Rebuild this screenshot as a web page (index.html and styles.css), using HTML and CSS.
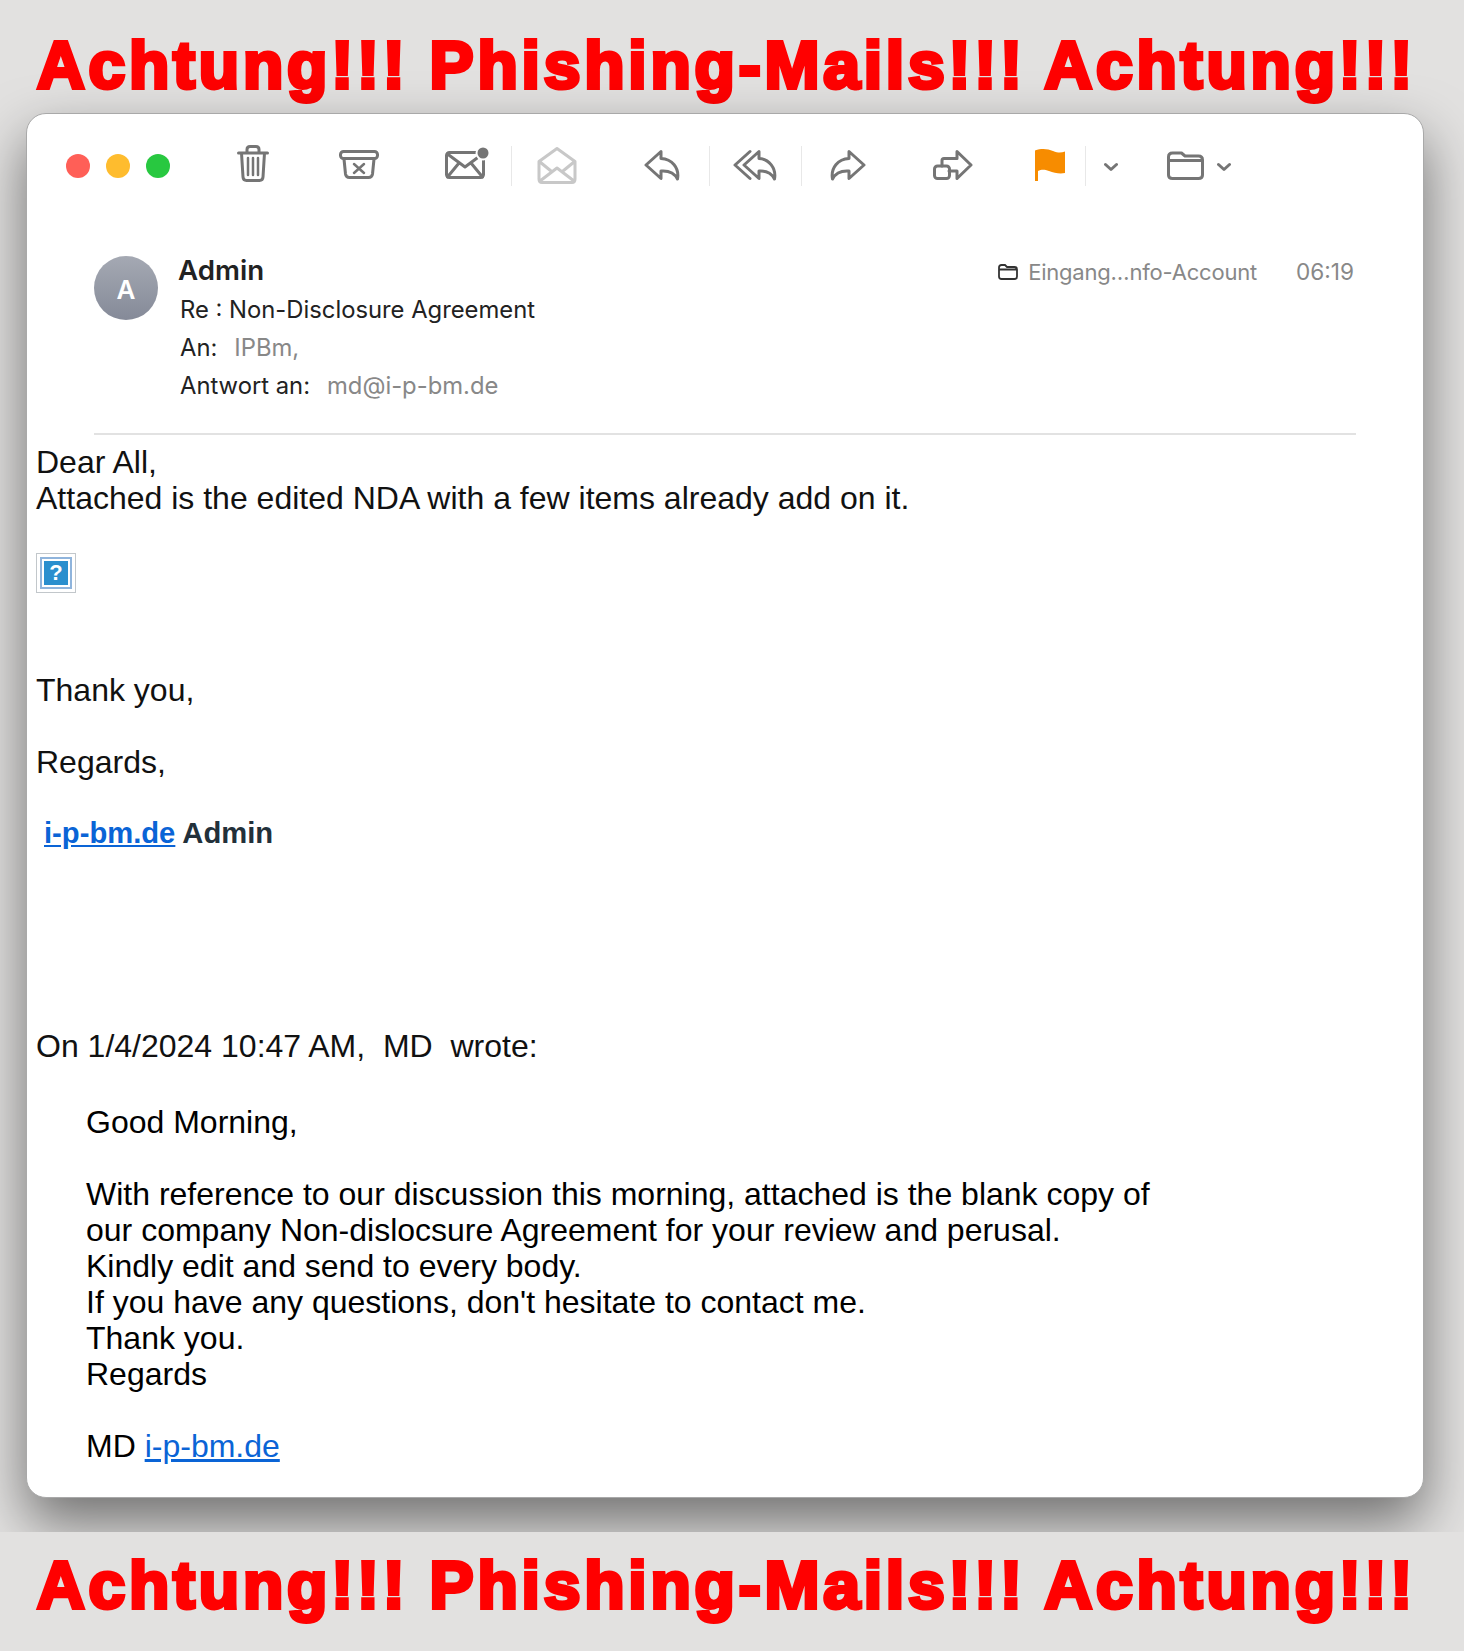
FILE: index.html
```html
<!DOCTYPE html>
<html lang="de">
<head>
    <title>Achtung Phishing-Mails</title>
    <link rel="stylesheet" href="styles.css">
</head>
<body>
    <div class="banner banner-top">Achtung!!! Phishing-Mails!!! Achtung!!!</div>

    <div class="window">
        <div class="toolbar">
            <div class="lights">
                <span class="light red"></span>
                <span class="light yellow"></span>
                <span class="light green"></span>
            </div>

            <svg class="icon trash" width="32" height="42" viewBox="0 0 32 42">
                <path d="M1.500 8H30.500M10 8V4.500Q10 1.500 13 1.500H19Q22 1.500 22 4.500V8M4.500 8L6 32Q6.200 35.500 9.500 35.500H22.500Q25.800 35.500 26 32L27.500 8"/>
                <path class="thin" d="M11 13V30M16 13V30M21 13V30"/>
            </svg>
            <svg class="icon archive" width="40" height="42" viewBox="0 -5 40 42">
                <rect x="1.500" y="1.500" width="37" height="7" rx="3"/>
                <path d="M5 9L6.500 24Q7 27.500 10.500 27.500H29.500Q33 27.500 33.500 24L35 9"/>
                <path class="thin" d="M15 14L25 23M25 14L15 23"/>
            </svg>
            <svg class="icon mail" width="44" height="42" viewBox="0 -3 44 42">
                <rect x="1.500" y="4.500" width="37" height="25" rx="3"/>
                <path d="M2.500 6L20 19L37.500 6M2.500 29L14 15M37.500 29L26 15"/>
                <circle class="dot-ring" cx="38" cy="5" r="7.500"/>
                <circle class="dot" cx="38" cy="5" r="5.500"/>
            </svg>
            <span class="sep sep-mail"></span>
            <svg class="icon open-mail" width="40" height="42" viewBox="0 -2 40 42">
                <path d="M2 14.500L20 1.500L38 14.500V32Q38 35.500 35 35.500H5Q2 35.500 2 32ZM3 15L14 24M37 15L26 24M3 34L20 21L37 34"/>
            </svg>

            <svg class="icon reply" width="36" height="42" viewBox="0 -5 36 42">
                <path d="M17 1.500L2 15L17 28.500V21C24 20.500 30.500 23 33.500 29C35.500 18 28 9 17 8.500Z"/>
            </svg>
            <span class="sep sep-reply"></span>
            <svg class="icon reply-all" width="44" height="42" viewBox="0 -5 44 42">
                <path d="M26 1.500L11 15L26 28.500V21C33 20.500 38.500 23 41.500 29C43.500 18 36 9 26 8.500Z"/>
                <path d="M17 1.500L2 15L17 28.500"/>
            </svg>
            <span class="sep sep-all"></span>
            <svg class="icon forward" width="36" height="42" viewBox="0 -5 36 42">
                <path d="M19 1.500L34 15L19 28.500V21C12 20.500 5.500 23 2.500 29C0.500 18 8 9 19 8.500Z"/>
            </svg>
            <svg class="icon redirect" width="40" height="42" viewBox="0 -5 40 42">
                <path d="M9 16V10.500Q9 8.500 11 8.500H24V1.500L38 15L24 28.500V21H16M24 21V28.500"/>
                <rect x="1.500" y="16" width="15" height="12.500" rx="3"/>
            </svg>
            <svg class="flag" width="30" height="42" viewBox="0 -4 30 42">
                <path d="M0 1.500C7-1 13 0 18 2S26 4 30 2.500V24C25 25 19 24 14 22S6 20.500 3 22V32H0Z"/>
            </svg>
            <span class="sep sep-flag"></span>
            <svg class="icon chevron chevron-flag" width="14" height="42" viewBox="0 -18 14 42">
                <path d="M1.500 1.500L7 6.500L12.500 1.500"/>
            </svg>
            <svg class="icon folder" width="37" height="42" viewBox="0 -6 37 42">
                <path d="M1.500 6Q1.500 2 5.500 2H14.500L18 5H31.500Q35.500 5 35.500 9V24Q35.500 27.500 31.500 27.500H5.500Q1.500 27.500 1.500 24ZM1.500 9.500H35.500"/>
            </svg>
            <svg class="icon chevron chevron-folder" width="14" height="42" viewBox="0 -18 14 42">
                <path d="M1.500 1.500L7 6.500L12.500 1.500"/>
            </svg>
        </div>

        <div class="mail-head">
            <div class="avatar">A</div>
            <div class="head-lines">
                <div class="sender">Admin</div>
                <div class="subject">Re : Non-Disclosure Agreement</div>
                <div class="head-line">An:<span class="head-value">IPBm,</span></div>
                <div class="head-line">Antwort an:<span class="head-value">md@i-p-bm.de</span></div>
            </div>
            <div class="head-meta">
                <svg class="mini-folder" width="20" height="16" viewBox="0 0 20 16">
                    <path d="M1 3.500Q1 1 3.500 1H7L9 3H16.500Q19 3 19 5.500V12.500Q19 15 16.500 15H3.500Q1 15 1 12.500ZM1 5.500H19"/>
                </svg>
                <span class="mailbox">Eingang…nfo-Account</span>
                <span class="time">06:19</span>
            </div>
        </div>

        <div class="mail-body">
            <div class="head-rule"></div>
            <p class="first">Dear All,<br>Attached is the edited NDA with a few items already add on it.</p>

            <div class="broken-img"><span class="broken-inner">?</span></div>

            <p class="thanks">Thank you,</p>
            <p>Regards,</p>
            <p class="signature"><a href="#">i-p-bm.de</a> Admin</p>

            <p class="quote-intro">On 1/4/2024 10:47 AM, &nbsp;MD &nbsp;wrote:</p>

            <div class="quote">
                <p>Good Morning,</p>
                <p>With reference to our discussion this morning, attached is the blank copy of<br>
                our company Non-dislocsure Agreement for your review and perusal.<br>
                Kindly edit and send to every body.<br>
                If you have any questions, don't hesitate to contact me.<br>
                Thank you.<br>
                Regards</p>
                <p>MD <a href="#">i-p-bm.de</a></p>
            </div>
        </div>
    </div>

    <div class="banner banner-bottom">Achtung!!! Phishing-Mails!!! Achtung!!!</div>
</body>
</html>
```

FILE: styles.css
```css
body {
    margin: 0;
    height: 1651px;
    display: flex;
    flex-direction: column;
    overflow: hidden;
    font-family: "Liberation Sans", Arial, sans-serif;
    background-color: #e2e1e0;
}
.banner {
    padding-right: 11px;
    text-align: center;
    font-size: 66px;
    font-weight: bold;
    letter-spacing: 3.8px;
    word-spacing: -1px;
    line-height: 80px;
    color: #ff0000;
    -webkit-text-stroke: 4px #ff0000;
    white-space: nowrap;
}
.banner-top {
    height: 113px;
    padding-top: 25px;
    box-sizing: border-box;
}
.banner-bottom {
    position: relative;
    height: 119px;
    margin-top: 34px;
    padding-top: 13px;
    box-sizing: border-box;
    background-color: #e2e1e0;
}
.window {
    height: 1385px;
    margin: 0 40px 0 26px;
    box-sizing: border-box;
    background-color: #fff;
    border: 1px solid #a9a9a9;
    border-radius: 20px;
    box-shadow: 0 25px 55px rgba(0, 0, 0, 0.5);
}

/* toolbar */
.toolbar {
    display: flex;
    align-items: flex-start;
    height: 132px;
    box-sizing: border-box;
    padding: 31px 0 0 39px;
}
.lights {
    display: flex;
    align-items: center;
    gap: 16px;
    height: 42px;
}
.light {
    width: 24px;
    height: 24px;
    border-radius: 50%;
}
.red { background-color: #ff5f57; }
.yellow { background-color: #febc2e; }
.green { background-color: #28c840; }

.icon {
    flex: none;
    fill: none;
    stroke: #757575;
    stroke-width: 3;
    stroke-linejoin: round;
    stroke-linecap: round;
}
.icon .thin { stroke-width: 2.5; }
.icon .dot { fill: #757575; stroke: none; }
.icon .dot-ring { fill: #fff; stroke: none; }
.flag { flex: none; fill: #f78c00; margin-left: 62px; }
.sep {
    flex: none;
    width: 1px;
    height: 40px;
    margin-top: 1px;
    background-color: #e8e8e8;
}
.trash { margin-left: 67px; }
.archive { margin-left: 70px; }
.mail { margin-left: 66px; }
.sep-mail { margin-left: 22px; }
.open-mail { margin-left: 25px; stroke: #c8c8c8; }
.reply { margin-left: 67px; }
.sep-reply { margin-left: 29px; }
.reply-all { margin-left: 23px; }
.sep-all { margin-left: 24px; }
.forward { margin-left: 28px; }
.redirect { margin-left: 67px; }
.sep-flag { margin-left: 20px; }
.chevron-flag { margin-left: 18px; }
.folder { margin-left: 49px; }
.chevron-folder { margin-left: 13px; }

/* mail header */
.mail-head {
    display: flex;
    align-items: flex-start;
    height: 187px;
    box-sizing: border-box;
    padding: 5px 69px 0 67px;
    font-family: Inter, "Liberation Sans", sans-serif;
    font-size: 23.8px;
    line-height: 38px;
    color: #222;
}
.avatar {
    width: 64px;
    height: 64px;
    margin-top: 5px;
    border-radius: 50%;
    background: linear-gradient(#a5a9b3, #858a98);
    color: #fff;
    font-size: 26px;
    font-weight: 600;
    line-height: 68px;
    text-align: center;
}
.head-lines { margin-left: 22px; }
.sender {
    margin-left: -2px;
    font-size: 27.7px;
    font-weight: 600;
}
.subject { margin-top: 2px; }
.head-value {
    margin-left: 17px;
    color: #888;
}
.head-meta {
    display: flex;
    align-items: center;
    margin-left: auto;
    height: 38px;
    padding-top: 2px;
    color: #888;
}
.mini-folder {
    fill: none;
    stroke: #333;
    stroke-width: 1.8;
    margin-right: 10px;
}
.mailbox {
    font-size: 22px;
    letter-spacing: -0.2px;
}
.time {
    margin-left: 39px;
    font-size: 22.6px;
}

/* mail body */
.mail-body {
    padding: 0 0 0 9px;
    font-size: 32px;
    line-height: 36px;
    color: #111;
}
.head-rule {
    height: 2px;
    margin: 0 67px 9px 58px;
    background-color: #e2e2e2;
}
.mail-body p { margin: 36px 0 0; }
.mail-body p.first { margin-top: 0; }
.mail-body a { color: #0a64d6; }
.broken-img {
    width: 38px;
    height: 38px;
    margin-top: 37px;
    border: 1px solid #c2c7cb;
    display: flex;
    align-items: center;
    justify-content: center;
}
.broken-inner {
    width: 24px;
    height: 24px;
    border: 2px solid #fff;
    outline: 2px solid #8fb4dc;
    background-color: #2a8fce;
    color: #fff;
    font-size: 22px;
    font-weight: bold;
    line-height: 24px;
    text-align: center;
}
.mail-body p.thanks { margin-top: 79px; }
.mail-body p.signature {
    padding-left: 8px;
    font-size: 29.2px;
    font-weight: bold;
    line-height: 34px;
    color: #22303a;
}
.mail-body p.quote-intro { margin-top: 178px; }
.quote {
    padding-left: 50px;
    margin-top: 40px;
    color: #000;
}
.quote p:first-child { margin-top: 0; }
```
